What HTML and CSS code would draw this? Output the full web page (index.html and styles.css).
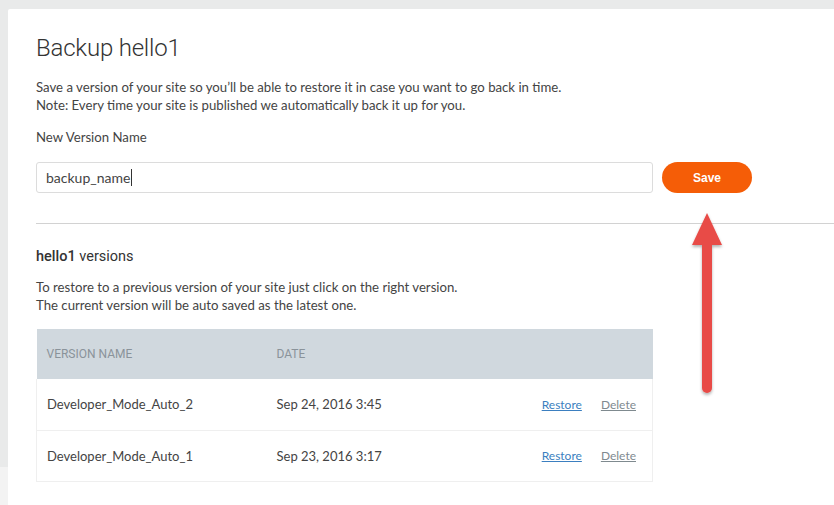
FILE: index.html
```html
<!DOCTYPE html>
<html lang="en">
<head>
	<meta charset="UTF-8">
	<title>Backup hello1</title>
	<link rel="stylesheet" href="styles.css">
</head>
<body>
	<div class="side-strip"></div>

	<div class="modal">
		<h1 class="title">Backup hello1</h1>
		<p class="intro">Save a version of your site so you’ll be able to restore it in case you want to go back in time.<br>
			Note: Every time your site is published we automatically back it up for you.</p>

		<label class="field-label" for="version-name">New Version Name</label>
		<div class="save-row">
			<div class="input-box"><span class="input-text">backup_name</span><span class="caret"></span></div>
			<button class="save-btn">Save</button>
		</div>

		<hr class="divider">

		<h2 class="versions-title"><b>hello1</b> versions</h2>
		<p class="intro">To restore to a previous version of your site just click on the right version.<br>
			The current version will be auto saved as the latest one.</p>

		<table class="versions">
			<thead>
				<tr>
					<th class="col-name">Version Name</th>
					<th>Date</th>
					<th></th>
				</tr>
			</thead>
			<tbody>
				<tr>
					<td>Developer_Mode_Auto_2</td>
					<td>Sep 24, 2016 3:45</td>
					<td class="actions"><a class="restore" href="#">Restore</a><a class="delete" href="#">Delete</a></td>
				</tr>
				<tr>
					<td>Developer_Mode_Auto_1</td>
					<td>Sep 23, 2016 3:17</td>
					<td class="actions"><a class="restore" href="#">Restore</a><a class="delete" href="#">Delete</a></td>
				</tr>
			</tbody>
		</table>

		<!-- annotation arrow pointing at the save button -->
		<svg class="arrow" width="44" height="190" viewBox="0 0 44 190">
			<defs>
				<filter id="sh" x="-50%" y="-10%" width="200%" height="120%">
					<feDropShadow dx="0" dy="2" stdDeviation="1.5" flood-color="#000" flood-opacity="0.3"/>
				</filter>
			</defs>
			<g filter="url(#sh)">
				<rect x="17" y="28" width="10" height="155" rx="5" fill="#e84b47"/>
				<polygon points="22,3 37,35 7,35" fill="#e84b47"/>
			</g>
		</svg>
	</div>
</body>
</html>
```

FILE: styles.css
```css
*{margin: 0;padding: 0;box-sizing: border-box;}
body {
	background: #e9eaea;
	font-family: Lato, "Open Sans", sans-serif;
	color: #444;
	height: 505px;
	overflow: hidden;
	position: relative;
}
.side-strip {
	position: absolute;
	left: 0;
	top: 467px;
	width: 8px;
	height: 40px;
	background: #f3f3f3;
}
.modal {
	position: absolute;
	left: 8px;
	top: 9px;
	right: 0;
	bottom: 0;
	background: #fff;
	padding: 24px 0 0 28px;
	border-top-left-radius: 2px;
}
.title {
	font: 300 24px/30px Roboto, sans-serif;
	color: #333;
	letter-spacing: -0.2px;
	margin-bottom: 15px;
}
.intro {
	font-size: 13.2px;
	line-height: 18px;
	color: #444;
	margin-bottom: 15px;
}
.field-label {
	display: block;
	font-size: 13.2px;
	line-height: 18px;
	margin-top: -1px;
	margin-bottom: 16px;
}
.save-row {
	display: flex;
	align-items: center;
	gap: 9px;
}
.input-box {
	width: 617px;
	height: 31px;
	border: 1px solid #dcdcdc;
	border-radius: 3px;
	padding: 0 9px;
	display: flex;
	align-items: center;
	font-size: 14px;
	color: #444;
}
.caret {
	display: inline-block;
	width: 1px;
	height: 17px;
	background: #333;
	margin-left: 1px;
}
.save-btn {
	width: 90px;
	height: 31px;
	border: none;
	border-radius: 16px;
	background: #f55d07;
	color: #fff;
	font: bold 12px "Liberation Sans", Arial, sans-serif;
}
.divider {
	border: none;
	border-top: 1px solid #d2d2d2;
	margin: 30px 0 23px;
}
.versions-title {
	font: 400 14.5px/20px Roboto, sans-serif;
	color: #333;
	margin-bottom: 11px;
}
.versions-title b {
	font-weight: 500;
}
.versions {
	width: 617px;
	border-collapse: collapse;
	margin-top: 7px;
	font-size: 13px;
}
.versions th {
	background: #d0d8de;
	height: 50px;
	text-align: left;
	padding-left: 10px;
	font: 400 12px Roboto, sans-serif;
	color: #8a939a;
	text-transform: uppercase;
}
.versions th.col-name {
	width: 230px;
}
.versions td {
	height: 51px;
	padding-left: 10px;
	border-bottom: 1px solid #efefef;
	color: #444;
}
.versions tbody tr {
	border-left: 1px solid #efefef;
	border-right: 1px solid #efefef;
}
.versions td.actions {
	text-align: right;
	padding-right: 16px;
	font-size: 12px;
}
.actions a {
	text-decoration: underline;
}
.restore {
	color: #3b7fc0;
	margin-right: 19px;
}
.delete {
	color: #7f8a8f;
}
.arrow {
	position: absolute;
	left: 677px;
	top: 201px;
}
```
